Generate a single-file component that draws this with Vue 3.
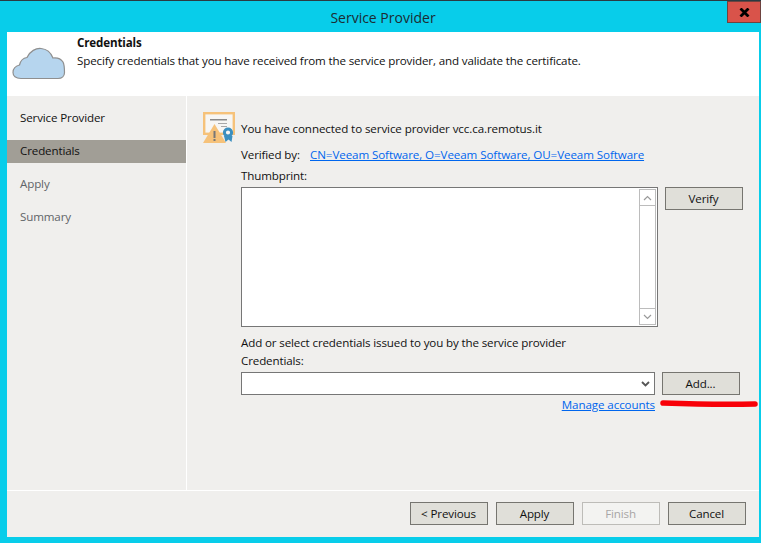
<script setup>
const steps = [
  { label: 'Service Provider', state: 'done' },
  { label: 'Credentials', state: 'active' },
  { label: 'Apply', state: 'off' },
  { label: 'Summary', state: 'off' },
]
</script>

<template>
  <div class="win">
    <div class="titlebar">
      <span class="title">Service Provider</span>
      <button class="close">
        <svg width="11" height="9" viewBox="0 0 11 9"><path d="M1.5 0.5 L9.5 8.5 M9.5 0.5 L1.5 8.5" stroke="#000" stroke-width="2.8" fill="none"/></svg>
      </button>
    </div>
    <div class="frame">
      <header class="head">
        <svg class="cloud" width="54" height="33" viewBox="0 0 54 33">
          <path d="M9 31.5 C3.5 31.5 1 29 1 25.5 C1 22 3.5 19 7.5 18 C8.5 13.5 11 11 15 10.5 C18 4 24 1 29 1.5 C35 2 39 6 41 11 C45 10.5 49 12 51 15 C52.5 18 52.5 21 52.5 25.5 C52.5 29 50 31.5 46 31.5 Z" fill="#b6d5ee" stroke="#8f8f8f" stroke-width="1.2"/>
        </svg>
        <div class="head-text">
          <div class="head-title">Credentials</div>
          <div class="head-sub">Specify credentials that you have received from the service provider, and validate the certificate.</div>
        </div>
      </header>
      <div class="middle">
        <nav class="side">
          <div v-for="s in steps" :key="s.label" class="step" :class="s.state">{{ s.label }}</div>
        </nav>
        <main class="content">
          <div class="status">
            <svg class="cert" width="32" height="32" viewBox="0 0 32 32">
              <rect x="1.2" y="1.2" width="29.6" height="20.6" fill="#f7f6f4" stroke="#f6c27a" stroke-width="2.4"/>
              <rect x="7" y="7" width="17" height="1.5" fill="#8a8a8a"/>
              <rect x="15" y="11" width="9" height="1" fill="#a8a8a8"/>
              <rect x="18" y="14" width="6" height="1" fill="#a8a8a8"/>
              <path d="M21 24 L22.5 30 L25.5 27.5 L28.5 30 L29.5 24 Z" fill="#3b8fc0"/>
              <circle cx="25" cy="20.5" r="3.6" fill="#f7f6f4" stroke="#3b8fc0" stroke-width="3"/>
              <path d="M11.5 12 L23 31 L0 31 Z" fill="#f6c27a"/>
              <rect x="10.5" y="19" width="2" height="7" fill="#777"/>
              <rect x="10.5" y="27" width="2" height="2" fill="#777"/>
            </svg>
            <span class="status-text">You have connected to service provider vcc.ca.remotus.it</span>
          </div>
          <div class="form">
            <div class="verified">
              <span class="vlabel">Verified by:</span>
              <a class="link">CN=Veeam Software, O=Veeam Software, OU=Veeam Software</a>
            </div>
            <div class="thumb-label">Thumbprint:</div>
            <div class="thumb-row">
              <div class="textarea">
                <div class="scroll">
                  <div class="sbtn">
                    <svg width="9" height="6" viewBox="0 0 9 6"><path d="M1 5 L4.5 1.5 L8 5" stroke="#9a9a9a" stroke-width="1.2" fill="none"/></svg>
                  </div>
                  <div class="strack"></div>
                  <div class="sbtn">
                    <svg width="9" height="6" viewBox="0 0 9 6"><path d="M1 1 L4.5 4.5 L8 1" stroke="#9a9a9a" stroke-width="1.2" fill="none"/></svg>
                  </div>
                </div>
              </div>
              <button class="btn verify">Verify</button>
            </div>
            <div class="add-label">Add or select credentials issued to you by the service provider</div>
            <div class="cred-label">Credentials:</div>
            <div class="cred-row">
              <div class="select">
                <svg width="9" height="6" viewBox="0 0 9 6"><path d="M1 1 L4.5 4.5 L8 1" stroke="#555" stroke-width="1.8" fill="none"/></svg>
              </div>
              <button class="btn add">Add...</button>
            </div>
            <div class="manage-row">
              <a class="link">Manage accounts</a>
              <svg class="marker" width="98" height="10" viewBox="0 0 98 10"><path d="M3 4 C30 5 60 6 95 5" stroke="#f80008" stroke-width="5.5" stroke-linecap="round" fill="none"/></svg>
            </div>
          </div>
        </main>
      </div>
      <footer class="foot">
        <button class="btn">&lt; Previous</button>
        <button class="btn">Apply</button>
        <button class="btn disabled">Finish</button>
        <button class="btn">Cancel</button>
      </footer>
    </div>
  </div>
</template>

<style>
html, body { margin: 0; padding: 0; background: #08cdea; }
</style>

<style scoped>
.win {
  width: 761px;
  height: 543px;
  box-sizing: border-box;
  background: #08cdea;
  border-top: 1px solid #2b3a42;
  display: flex;
  flex-direction: column;
  font-family: "Open Sans", "Noto Sans", sans-serif;
  font-size: 11.6px;
  letter-spacing: -0.14px;
  color: #111;
  overflow: hidden;
}
.titlebar {
  height: 31px;
  flex: none;
  position: relative;
  display: flex;
  align-items: center;
  justify-content: center;
  padding-left: 5px;
}
.title { font-size: 14px; letter-spacing: 0; color: #1c2b33; position: relative; top: 1px; }
.close {
  position: absolute;
  right: 0;
  top: 0;
  width: 34px;
  height: 22px;
  box-sizing: border-box;
  padding: 0;
  background: #d9534a;
  border: 1px solid #6e4340;
  display: flex;
  align-items: center;
  justify-content: center;
}
.frame {
  flex: 1;
  margin: 0 2px 6px 7px;
  background: #f0efed;
  display: flex;
  flex-direction: column;
  min-height: 0;
}
.head {
  height: 64px;
  flex: none;
  background: #fff;
  display: flex;
}
.cloud { margin: 15px 0 0 5px; }
.head-text { margin-left: 11px; padding-top: 3px; }
.head-title { font-weight: 700; line-height: 16px; }
.head-sub { margin-top: 1px; line-height: 18px; }
.middle { flex: 1; display: flex; min-height: 0; }
.side {
  width: 179px;
  flex: none;
  border-right: 1px solid #fff;
  padding-top: 11px;
}
.step {
  height: 23px;
  line-height: 22px;
  padding-left: 13px;
  margin-bottom: 10px;
}
.step.active { background: #a19e96; }
.step.off { color: #5f6468; }
.content { flex: 1; padding: 16px 16px 0 16px; min-width: 0; }
.status { display: flex; align-items: flex-start; height: 35px; }
.cert { flex: none; }
.status-text { margin: 8px 0 0 6px; line-height: 18px; letter-spacing: -0.1px; }
.form { margin-left: 38px; }
.verified { display: flex; height: 18px; line-height: 18px; margin-top: -1px; }
.vlabel { width: 69px; flex: none; }
.link { color: #0066ee; text-decoration: underline; letter-spacing: -0.09px; }
.thumb-label { line-height: 18px; margin-top: 3px; }
.thumb-row { display: flex; margin-top: 2px; align-items: flex-start; }
.textarea {
  width: 417px;
  height: 140px;
  box-sizing: border-box;
  background: #fff;
  border: 1px solid #767676;
  display: flex;
  justify-content: flex-end;
  padding: 1px;
}
.scroll {
  width: 17px;
  display: flex;
  flex-direction: column;
  box-sizing: border-box;
  background: #fff;
}
.sbtn {
  height: 17px;
  box-sizing: border-box;
  border: 1px solid #bcbcbc;
  display: flex;
  align-items: center;
  justify-content: center;
  flex: none;
}
.strack { flex: 1; border-left: 1px solid #bcbcbc; border-right: 1px solid #bcbcbc; }
.btn {
  width: 78px;
  height: 23px;
  box-sizing: border-box;
  padding: 0 1px 0 0;
  background: #e0dfd9;
  border: 1px solid #767570;
  font: inherit;
  letter-spacing: inherit;
  color: #111;
}
.verify { margin-left: 7px; }
.add-label { line-height: 18px; margin-top: 7px; }
.cred-label { line-height: 18px; }
.cred-row { display: flex; margin-top: 2px; }
.select {
  width: 414px;
  height: 23px;
  box-sizing: border-box;
  background: #fff;
  border: 1px solid #767676;
  display: flex;
  align-items: center;
  justify-content: flex-end;
  padding-right: 4px;
}
.add { margin-left: 7px; }
.manage-row {
  width: 414px;
  box-sizing: border-box;
  display: flex;
  justify-content: flex-end;
  margin-top: 1px;
  line-height: 18px;
  position: relative;
}
.marker { position: absolute; left: 419px; top: 3px; }
.foot {
  height: 47px;
  flex: none;
  box-sizing: border-box;
  border-top: 1px solid #fff;
  display: flex;
  justify-content: flex-end;
  gap: 8px;
  padding: 11px 13px 0 0;
}
.btn.disabled {
  background: #f3f3f1;
  border-color: #bdbcb8;
  color: #a9a6a6;
}
</style>
